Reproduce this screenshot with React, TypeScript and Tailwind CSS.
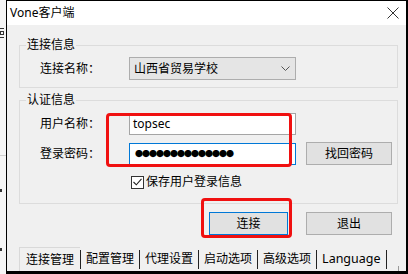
import type { ReactNode } from "react";

function GroupBox({ title, className, children }: { title: string; className: string; children: ReactNode }) {
  return (
    <div className={`relative ml-[12px] w-[379px] border border-[#dcdcdc] ${className}`}>
      <span className="absolute left-[6px] top-[-9px] bg-[#f0f0f0] px-[1px] leading-[16px]">{title}</span>
      {children}
    </div>
  );
}

function Button({ label, primary, className }: { label: string; primary?: boolean; className: string }) {
  return (
    <div
      className={`flex h-[23px] items-center justify-center border bg-[#e1e1e1] leading-[16px] ${
        primary ? "border-[#0078d7]" : "border-[#adadad]"
      } ${className}`}
    >
      {label}
    </div>
  );
}

const TABS = ["连接管理", "配置管理", "代理设置", "启动选项", "高级选项", "Language"];

export default function App() {
  return (
    <div className="flex h-[274px] w-[408px] overflow-hidden bg-[#f5f5f5] font-['Noto_Sans','Noto_Sans_CJK_SC',sans-serif] text-[12px] text-black">
      {/* slice of the window behind */}
      <div className="flex w-[6px] flex-col">
        <div className="mt-[27px] flex h-[12px] flex-col justify-between py-[1px]">
          <div className="h-px w-[4px] bg-[#333]" />
          <div className="h-[4px] w-[4px] border border-[#333]" />
          <div className="h-px w-[4px] bg-[#333]" />
        </div>
        <div className="mt-[116px] h-px w-full bg-[#d0d0d0]" />
        <div className="mt-[33px] h-[3px] w-[2px] bg-[#333]" />
        <div className="mt-[56px] h-[3px] w-[2px] bg-[#333]" />
      </div>

      <div className="relative flex h-[274px] w-[402px] flex-col border-b-[3px] border-l border-r-2 border-t border-black bg-[#f0f0f0]">
        {/* title bar */}
        <div className="flex h-[24px] items-center justify-between bg-white pl-[3px] pr-[6px]">
          <span className="leading-[16px]">Vone客户端</span>
          <svg width="12" height="12" viewBox="0 0 12 12" className="mr-[1px]">
            <path d="M0.5 0.5 L11.5 11.5 M11.5 0.5 L0.5 11.5" stroke="#333" strokeWidth="1" fill="none" />
          </svg>
        </div>

        {/* 连接信息 */}
        <GroupBox title="连接信息" className="mt-[20px] h-[43px] pl-[20px] pt-[11px]">
          <div className="flex items-center">
            <span className="w-[89px] leading-[16px]">连接名称：</span>
            <div className="flex h-[23px] w-[167px] items-center justify-between border border-[#adadad] bg-[#e5e5e5] pl-[4px] pr-[5px]">
              <span className="leading-[16px]">山西省贸易学校</span>
              <svg width="9" height="5" viewBox="0 0 9 5">
                <path d="M0.5 0.5 L4.5 4.5 L8.5 0.5" stroke="#555" strokeWidth="1" fill="none" />
              </svg>
            </div>
          </div>
        </GroupBox>

        {/* 认证信息 */}
        <GroupBox title="认证信息" className="mt-[12px] h-[104px] pl-[20px] pt-[12px]">
          <div className="flex items-center">
            <span className="w-[89px] leading-[16px]">用户名称：</span>
            <div className="flex h-[22px] w-[167px] items-center border border-[#a5a5a5] bg-white pl-[3px]">
              <span className="leading-[16px]">topsec</span>
            </div>
          </div>
          <div className="mt-[7px] flex items-center">
            <span className="w-[89px] leading-[16px]">登录密码：</span>
            <div className="flex h-[22px] w-[167px] items-center border border-[#0078d7] bg-white pl-[5px]">
              {Array.from({ length: 14 }).map((_, i) => (
                <span key={i} className="w-[7px] text-[8px] leading-[10px]">
                  ●
                </span>
              ))}
            </div>
            <Button label="找回密码" className="ml-[10px] w-[86px]" />
          </div>
          <div className="ml-[91px] mt-[9px] flex items-center">
            <div className="flex h-[13px] w-[13px] items-center justify-center border border-[#333] bg-white">
              <svg width="9" height="8" viewBox="0 0 9 8">
                <path d="M0.5 4 L3.3 6.8 L8.5 0.8" stroke="#222" strokeWidth="1.1" fill="none" />
              </svg>
            </div>
            <span className="ml-[2px] leading-[16px]">保存用户登录信息</span>
          </div>
        </GroupBox>

        {/* buttons */}
        <div className="mt-[8px] flex pl-[202px]">
          <Button label="连接" primary className="w-[79px]" />
          <Button label="退出" className="ml-[18px] w-[86px]" />
        </div>

        {/* tabs */}
        <div className="mt-[12px] flex h-[24px] items-start overflow-hidden">
          {TABS.map((t, i) => (
            <div key={t} className="flex h-[24px] items-start">
              <span
                className={`pt-[4px] leading-[16px] ${
                  i === 0 ? "ml-[12px] h-[24px] border-l border-t border-[#d9d9d9] pl-[6px] pr-[6px]" : "pl-[5px] pr-[5px]"
                } ${i === 5 ? "pl-[2px] pr-[3px] text-[12.5px]" : ""}`}
              >
                {t}
              </span>
              <div className="mt-[3px] h-[19px] w-px bg-[#222]" />
            </div>
          ))}
          <div className="ml-[11px] mt-[19px] h-[5px] w-px bg-[#999]" />
        </div>

        {/* red annotations */}
        <div className="absolute left-[99px] top-[112px] h-[54px] w-[186px] rounded-[4px] border-[3px] border-[#f01010]" />
        <div className="absolute left-[194px] top-[197px] h-[40px] w-[91px] rounded-[4px] border-[3px] border-[#f01010]" />
      </div>
    </div>
  );
}
